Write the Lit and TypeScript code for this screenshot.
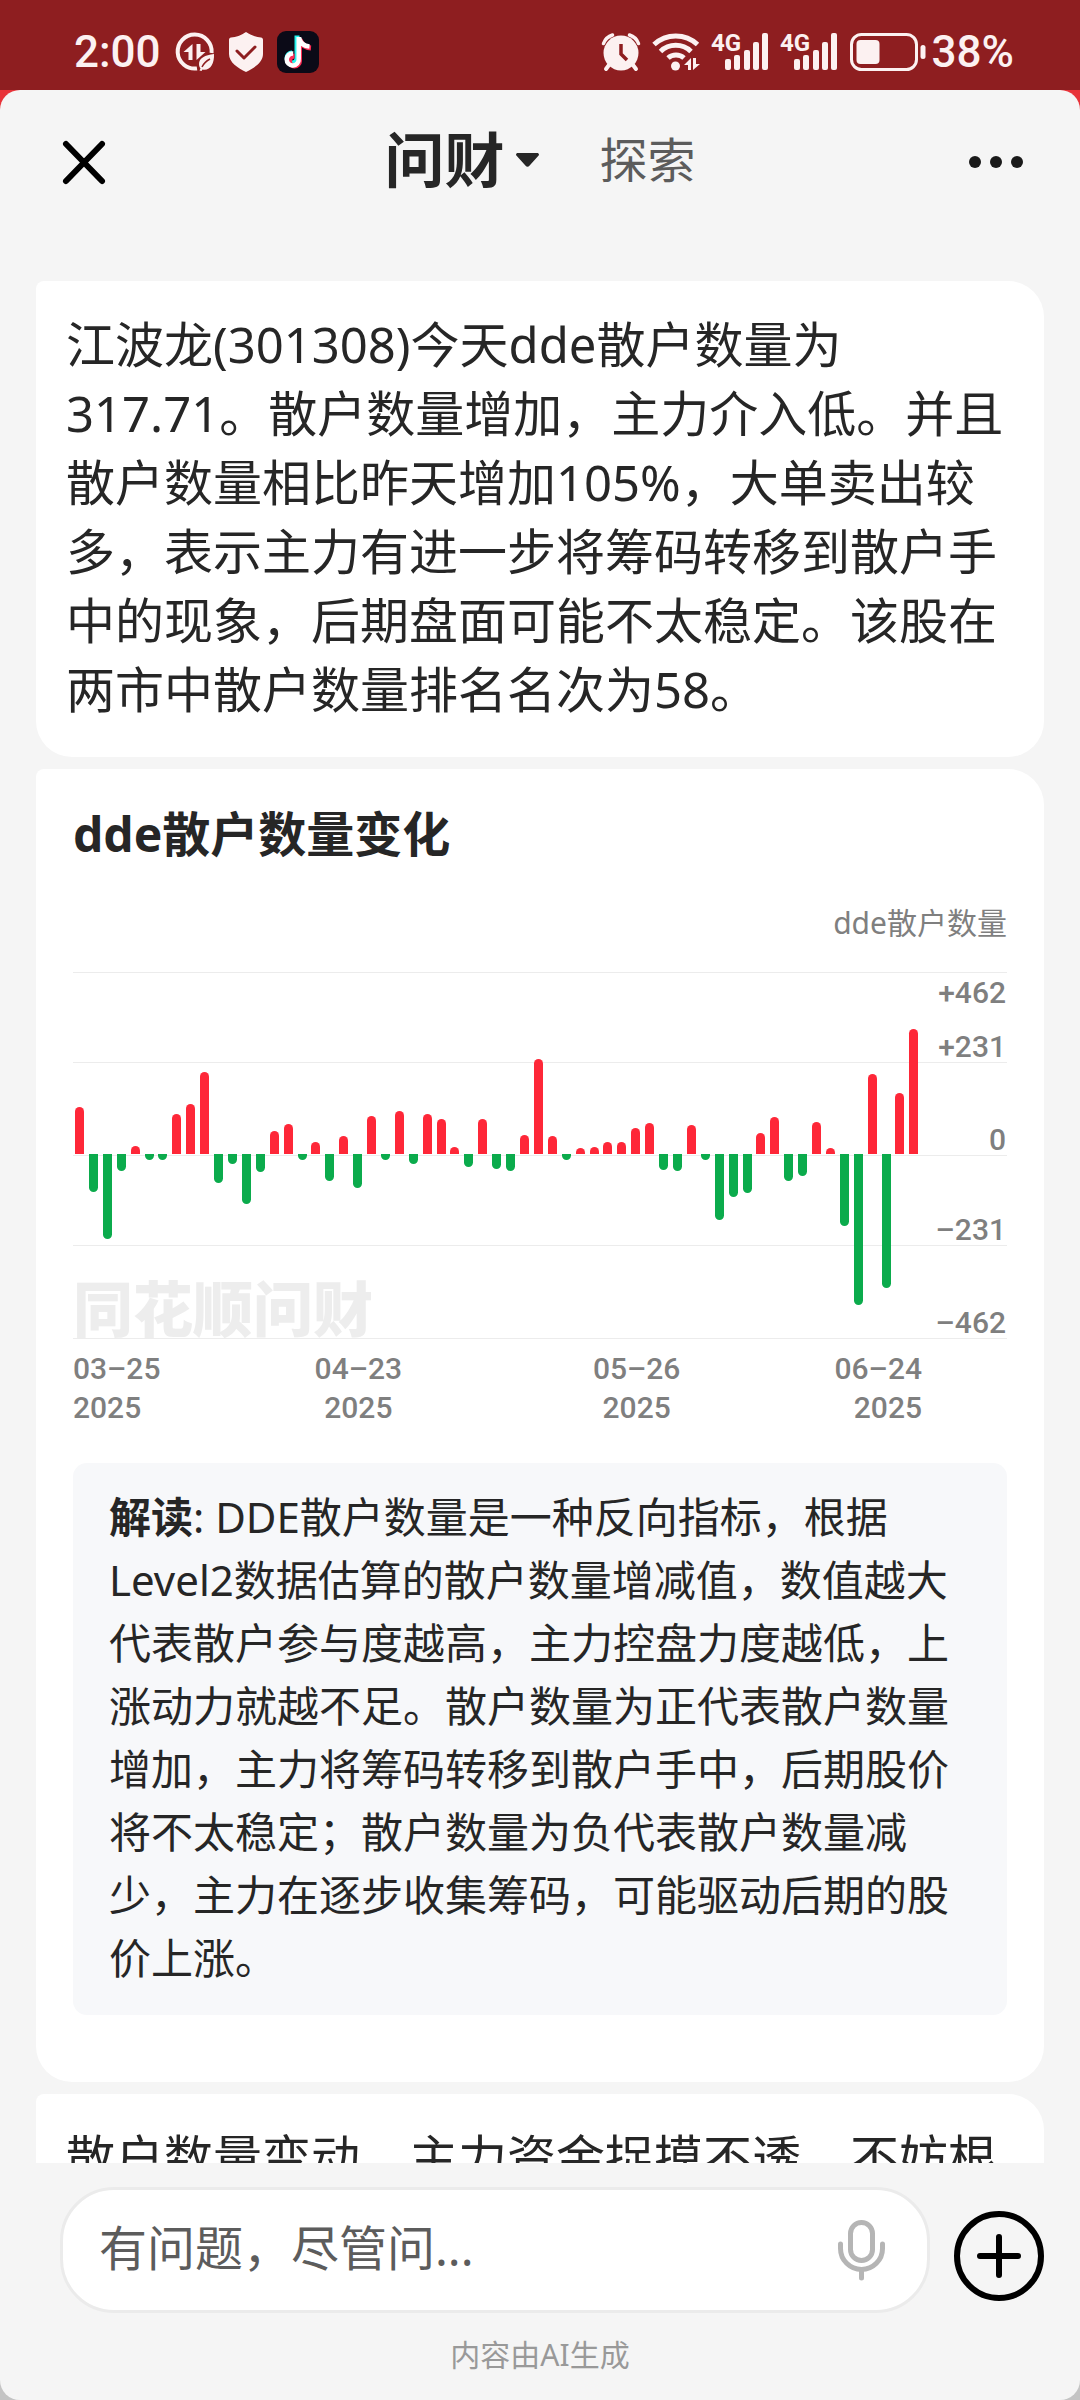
import { LitElement, html, css } from "lit";
import { customElement, property } from "lit/decorators.js";

const AXIS_MAX = 462;
const HALF_HEIGHT = 183;
const BASELINE = 182;

const VALUES = [
  118, -97, -214, -43, 21, -15, -15, 102, 127, 206, -73, -25, -125, -45, 58, 75,
  -15, 30, -67, 46, -87, 95, -15, 109, -24, 102, 88, 18, -32, 88, -37, -42, 48,
  240, 45, -15, 15, 18, 31, 30, 66, 79, -40, -44, 72, -15, -167, -109, -98, 54,
  94, -67, -56, 82, 15, -183, -380, 203, -338, 155, 316,
];

const DATES = [
  ["03–25", "2025"],
  ["04–23", "2025"],
  ["05–26", "2025"],
  ["06–24", "2025"],
];

@customElement("status-bar")
class StatusBar extends LitElement {
  static styles = css`
    :host {
      display: flex;
      justify-content: space-between;
      align-items: center;
      box-sizing: border-box;
      height: 90px;
      padding: 14px 66px 0 74px;
      background: #8e1e20;
      color: #fcf1f1;
      font-family: Roboto, sans-serif;
      font-weight: 500;
      font-size: 44px;
      line-height: 48px;
    }
    .group {
      display: flex;
      align-items: center;
    }
    .left {
      gap: 14px;
    }
    .right {
      gap: 12px;
    }
    .battery {
      display: flex;
      align-items: center;
      gap: 6px;
    }
    svg {
      display: block;
      fill: currentColor;
      overflow: visible;
    }
    .net {
      font: 700 24px/24px Roboto, sans-serif;
    }
  `;

  private signal() {
    return html`<svg width="57" height="40" viewBox="0 0 57 40" aria-hidden="true">
      <text class="net" x="-1" y="19">4G</text>
      <rect x="13" y="27" width="6" height="11" rx="2" />
      <rect x="22" y="23" width="6" height="15" rx="2" />
      <rect x="32" y="18" width="6" height="20" rx="2" />
      <rect x="41" y="10" width="6" height="28" rx="2" />
      <rect x="50" y="1" width="6" height="37" rx="2" />
    </svg>`;
  }

  render() {
    return html`
      <div class="group left">
        <span>2:00</span>
        <svg width="40" height="40" viewBox="0 0 40 40" aria-hidden="true">
          <path d="M36.6 21A17 17 0 1 0 22 36.4" fill="none" stroke="currentColor" stroke-width="4" />
          <path d="M17.5 11v16h-4v-8H8.5zM21.5 11v16l9-8h-5v-8z" transform="translate(0 1)" />
          <path d="M39 22c-9 1-15 4-15 10 0 2 .6 3 1.500 4.500l-1 2 2 .5 1-1.500C35 39 39.500 32 39 22z" />
          <path d="M27 35c2-4 4-6 8-8" fill="none" stroke="#8e1e20" stroke-width="1.500" />
        </svg>
        <svg width="34" height="40" viewBox="0 0 34 40" aria-hidden="true">
          <path d="M17 0c5 3.500 10 5 15 5.500 1.200.2 2 1 2 2.200V22c0 8.500-9 14-17 18C9 36 0 30.500 0 22V7.700C0 6.500.8 5.700 2 5.500 7 5 12 3.500 17 0z" />
          <path d="M8 19l7 7 11-11" fill="none" stroke="#8e1e20" stroke-width="3" stroke-linecap="round" stroke-linejoin="round" />
        </svg>
        <svg width="42" height="42" viewBox="0 0 42 42" aria-hidden="true">
          <rect width="42" height="42" rx="9" fill="#0b0a17" />
          <path d="M20.500 5v22.500a5 5 0 1 1-5-5" fill="none" stroke="#25f4ee" stroke-width="5" transform="translate(-.5 -.5)" />
          <path d="M20.500 6v22.500a5 5 0 1 1-5-5M21 7c1.500 5 5 8 11 8.500" fill="none" stroke="#fe2c55" stroke-width="5" transform="translate(2 1.500)" />
          <path d="M21.700 6v22a6 6 0 1 1-5.500-5.500M22 6.500c1 5 4.500 8.500 10.500 9" fill="none" stroke="#fff" stroke-width="4.500" />
        </svg>
      </div>
      <div class="group right">
        <svg width="38" height="38" viewBox="0 0 38 38" aria-hidden="true">
          <circle cx="19" cy="20" r="17.500" />
          <path d="M1.500 10.500A14 14 0 0 1 10.500 2M36.500 10.500A14 14 0 0 0 27.500 2" fill="none" stroke="currentColor" stroke-width="3.500" stroke-linecap="round" />
          <path d="M7 32l-3 4M31 32l3 4" stroke="currentColor" stroke-width="4" stroke-linecap="round" />
          <path d="M19 11v10l6 6" fill="none" stroke="#8e1e20" stroke-width="3.500" />
        </svg>
        <svg width="48" height="40" viewBox="0 0 48 40" aria-hidden="true">
          <g fill="none" stroke="currentColor" stroke-width="5">
            <path d="M2 12.500a32 32 0 0 1 43.500 0" />
            <path d="M8.500 19.500a22 22 0 0 1 30.500 0" />
            <path d="M16 26a12 12 0 0 1 16 0" />
          </g>
          <circle cx="23.500" cy="34" r="4.500" />
          <path d="M39 26v12h-3v-5h-4zM41 26v12l7-6h-4v-6z" />
        </svg>
        ${this.signal()} ${this.signal()}
        <span class="battery">
          <svg width="76" height="40" viewBox="0 0 76 40" aria-hidden="true">
            <rect x="1.500" y="2.500" width="65" height="35" rx="10" fill="none" stroke="currentColor" stroke-width="3" />
            <rect x="6.500" y="8" width="23" height="24" rx="4" />
            <rect x="70.500" y="13" width="5" height="14" rx="2.500" />
          </svg>
          <span>38%</span>
        </span>
      </div>
    `;
  }
}

@customElement("app-header")
class AppHeader extends LitElement {
  static styles = css`
    :host {
      display: grid;
      grid-template-columns: 1fr auto 1fr;
      align-items: center;
      height: 144px;
      padding: 0 54px;
    }
    button {
      display: flex;
      align-items: center;
      margin: 0;
      padding: 0;
      border: 0;
      background: none;
      font: inherit;
      color: inherit;
    }
    .close {
      justify-self: start;
    }
    .more {
      justify-self: end;
    }
    .tabs {
      display: flex;
      align-items: center;
      gap: 60px;
      padding-bottom: 4px;
    }
    .current {
      gap: 12px;
      font-size: 60px;
      line-height: 72px;
      font-weight: 700;
      color: #262626;
    }
    .other {
      font-size: 48px;
      line-height: 72px;
      color: #5c5c5c;
    }
    svg {
      display: block;
    }
  `;

  render() {
    return html`
      <button class="close" aria-label="关闭">
        <svg width="60" height="60" viewBox="0 0 60 60">
          <path d="M12 12l36 37M48 12L12 49" stroke="#000" stroke-width="6" stroke-linecap="round" />
        </svg>
      </button>
      <nav class="tabs">
        <button class="current">
          问财
          <svg width="23" height="14" viewBox="0 0 23 14">
            <path d="M2 0h19c1.800 0 2.600 1.500 1.400 2.800l-9 10c-1 1.200-2.800 1.200-3.800 0l-9-10C-.6 1.500.2 0 2 0z" fill="#262626" />
          </svg>
        </button>
        <button class="other">探索</button>
      </nav>
      <button class="more" aria-label="更多">
        <svg width="60" height="60" viewBox="0 0 60 60" fill="#1a1a1a">
          <circle cx="9" cy="30" r="6" />
          <circle cx="30" cy="30" r="6" />
          <circle cx="51" cy="30" r="6" />
        </svg>
      </button>
    `;
  }
}

@customElement("dde-chart")
class DdeChart extends LitElement {
  @property({ attribute: false }) values: number[] = [];

  static styles = css`
    :host {
      display: block;
      color: #7f7f7f;
      font-size: 30px;
    }
    .legend {
      text-align: right;
      line-height: 42px;
      margin-bottom: 28px;
    }
    .plot {
      display: grid;
      position: relative;
      font-family: Roboto, sans-serif;
      font-weight: 500;
    }
    .lines,
    .bars {
      grid-area: 1 / 1;
    }
    .lines {
      display: grid;
      grid-template-rows: 90px 93px 90px 93px;
      border-bottom: 1px solid #ececec;
    }
    .line {
      display: flex;
      flex-direction: column;
      justify-content: flex-end;
      align-items: flex-end;
      border-top: 1px solid #ececec;
      line-height: 30px;
      padding-right: 1px;
    }
    .line.first {
      justify-content: space-between;
    }
    .top {
      line-height: 40px;
    }
    .bars {
      display: flex;
      align-items: flex-start;
      justify-content: space-between;
      padding: 0 88px 0 2px;
    }
    .bar {
      width: 9px;
    }
    .up {
      background: #fe2738;
      border-radius: 5px 5px 0 0;
    }
    .down {
      background: #0bab4c;
      border-radius: 0 0 5px 5px;
    }
    .watermark {
      position: absolute;
      left: 0;
      bottom: 3px;
      font: 900 60px/60px "Noto Sans CJK SC", sans-serif;
      color: #ededed;
    }
    .dates {
      display: grid;
      grid-template-columns: 146fr 278fr 278fr 146fr;
      margin-top: 10px;
      padding-right: 85px;
      font-family: Roboto, sans-serif;
      font-weight: 500;
      line-height: 39px;
      text-align: center;
    }
    .date:first-child {
      text-align: left;
    }
    .date:last-child {
      text-align: right;
    }
    .day,
    .year {
      display: block;
    }
  `;

  private bar(value: number) {
    const height = Math.round((Math.abs(value) / AXIS_MAX) * HALF_HEIGHT);
    const top = value > 0 ? BASELINE - height : BASELINE;
    return html`<div
      class="bar ${value > 0 ? "up" : "down"}"
      style="height:${height}px;margin-top:${top}px"
    ></div>`;
  }

  render() {
    return html`
      <div class="legend">dde散户数量</div>
      <div class="plot">
        <div class="watermark">同花顺问财</div>
        <div class="lines">
          <div class="line first"><span class="top">+462</span><span>+231</span></div>
          <div class="line"><span>0</span></div>
          <div class="line"><span>–231</span></div>
          <div class="line"><span>–462</span></div>
        </div>
        <div class="bars">${this.values.map((v) => this.bar(v))}</div>
      </div>
      <div class="dates">
        ${DATES.map(
          ([day, year]) => html`<div class="date">
            <span class="day">${day}</span><span class="year">${year}</span>
          </div>`
        )}
      </div>
    `;
  }
}

@customElement("ask-bar")
class AskBar extends LitElement {
  static styles = css`
    :host {
      display: block;
      padding: 24px 36px 24px 60px;
    }
    .row {
      display: flex;
      align-items: flex-end;
      gap: 24px;
    }
    .field {
      display: flex;
      align-items: center;
      flex: 1;
      min-width: 0;
      box-sizing: border-box;
      height: 126px;
      padding: 0 33px 0 36px;
      border: 3px solid #ebebeb;
      border-radius: 54px;
      background: #fff;
    }
    .input {
      flex: 1;
      min-width: 0;
      height: 72px;
      margin: 0;
      padding: 0 0 6px;
      border: 0;
      outline: 0;
      background: none;
      font: inherit;
      font-size: 48px;
      color: #262626;
    }
    .input::placeholder {
      color: #5c5c5c;
      opacity: 1;
    }
    button {
      margin: 0;
      padding: 0;
      border: 0;
      background: none;
    }
    .add {
      margin-bottom: 12px;
    }
    svg {
      display: block;
    }
    .note {
      margin: 21px 24px 0 0;
      text-align: center;
      font-size: 30px;
      line-height: 42px;
      color: #999;
    }
  `;

  render() {
    return html`
      <form class="row">
        <div class="field">
          <input class="input" type="text" aria-label="有问题，尽管问..." placeholder="有问题，尽管问..." />
          <button class="mic" type="button" aria-label="语音输入">
            <svg width="66" height="66" viewBox="0 0 66 66" fill="none" stroke="#b5b5b5" stroke-width="5" stroke-linecap="round">
              <rect x="22.500" y="5.500" width="22" height="38" rx="11" />
              <path d="M12.500 27v4.500a21 21 0 0 0 42 0V27M33.500 53v8" />
            </svg>
          </button>
        </div>
        <button class="add" type="button" aria-label="添加">
          <svg width="90" height="90" viewBox="0 0 90 90" fill="none" stroke="#000" stroke-width="6" stroke-linecap="round">
            <circle cx="45" cy="45" r="42" />
            <path d="M45 26v38M26 45h38" />
          </svg>
        </button>
      </form>
      <div class="note">内容由AI生成</div>
    `;
  }
}

@customElement("app-root")
class AppRoot extends LitElement {
  static styles = css`
    :host {
      display: flex;
      flex-direction: column;
      height: 100vh;
      background: linear-gradient(#e83339 50%, #c4c4c4 50%);
      font-family: "Noto Sans", "Noto Sans CJK SC", sans-serif;
      color: #262626;
    }
    .sheet {
      display: flex;
      flex-direction: column;
      flex: 1;
      min-height: 0;
      overflow: hidden;
      border-radius: 20px;
      background: #f5f5f5;
    }
    .feed {
      display: flex;
      flex-direction: column;
      gap: 12px;
      flex: 1;
      min-height: 0;
      overflow-y: auto;
      scrollbar-width: none;
      padding: 47px 36px 0;
    }
    .card {
      flex: none;
      border-radius: 8px 36px 36px 36px;
      background: #fff;
    }
    .text {
      margin: 0;
      padding: 29px 34px 33px 30px;
      font-size: 49px;
      line-height: 69px;
    }
    .report {
      padding: 35px 37px 67px;
    }
    .title {
      margin: 0 0 38px;
      font-size: 48px;
      line-height: 60px;
      font-weight: 700;
    }
    .explain {
      margin: 36px 0 0;
      padding: 22px 36px 26px;
      border-radius: 14px;
      background: #f7f8fa;
      font-size: 42px;
      line-height: 63px;
    }
  `;

  render() {
    return html`
      <status-bar></status-bar>
      <div class="sheet">
        <app-header></app-header>
        <main class="feed">
          <section class="card">
            <p class="text">江波龙(301308)今天dde散户数量为317.71。散户数量增加，主力介入低。并且散户数量相比昨天增加105%，大单卖出较多，表示主力有进一步将筹码转移到散户手中的现象，后期盘面可能不太稳定。该股在两市中散户数量排名名次为58。</p>
          </section>
          <section class="card report">
            <h2 class="title">dde散户数量变化</h2>
            <dde-chart .values=${VALUES}></dde-chart>
            <p class="explain"><b>解读</b>: DDE散户数量是一种反向指标，根据Level2数据估算的散户数量增减值，数值越大代表散户参与度越高，主力控盘力度越低，上涨动力就越不足。散户数量为正代表散户数量增加，主力将筹码转移到散户手中，后期股价将不太稳定；散户数量为负代表散户数量减少，主力在逐步收集筹码，可能驱动后期的股价上涨。</p>
          </section>
          <section class="card">
            <p class="text">散户数量变动，主力资金捉摸不透，不妨根</p>
          </section>
        </main>
        <ask-bar></ask-bar>
      </div>
    `;
  }
}
